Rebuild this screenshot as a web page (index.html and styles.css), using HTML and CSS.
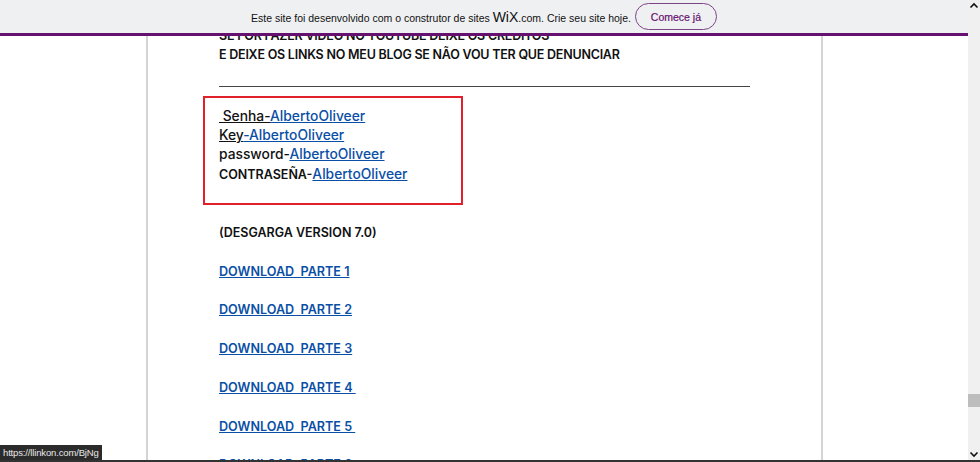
FILE: index.html
```html
<!DOCTYPE html>
<html lang="pt">
<head>
    <meta charset="UTF-8">
    <meta name="viewport" content="width=device-width, initial-scale=1.0">
    <title>Download</title>
    <link rel="stylesheet" href="styles.css">
</head>
<body>

<div class="window">
    <div class="viewport">
        <div class="banner">
            <span class="banner-text">Este site foi desenvolvido com o construtor de sites <span class="wix">WiX</span>.com. Crie seu site hoje.</span>
            <a class="banner-btn" href="#">Comece já</a>
        </div>

        <div class="column">
            <p class="line strong tight">SE FOR FAZER VIDEO NO YOUTUBE DEIXE OS CREDITOS</p>
            <p class="line strong tight">E DEIXE OS LINKS NO MEU BLOG SE NÃO VOU TER QUE DENUNCIAR</p>
            <hr class="rule">

            <div class="passwords">
                <p class="line"><u>&nbsp;Senha-</u><a href="#">AlbertoOliveer</a></p>
                <p class="line"><u>Key</u><a href="#">-AlbertoOliveer</a></p>
                <p class="line">password-<a href="#">AlbertoOliveer</a></p>
                <p class="line"><span class="caps">CONTRASEÑA-</span><a href="#">AlbertoOliveer</a></p>
            </div>

            <p class="line strong">(DESGARGA VERSION 7.0)</p>

            <ul class="downloads">
                <li><a href="#">DOWNLOAD&nbsp; PARTE 1</a></li>
                <li><a href="#">DOWNLOAD&nbsp; PARTE 2</a></li>
                <li><a href="#">DOWNLOAD&nbsp; PARTE 3</a></li>
                <li><a href="#">DOWNLOAD&nbsp; PARTE 4&nbsp;</a></li>
                <li><a href="#">DOWNLOAD&nbsp; PARTE 5&nbsp;</a></li>
                <li><a href="#">DOWNLOAD&nbsp; PARTE 6</a></li>
            </ul>
        </div>

        <div class="status">https://llinkon.com/BjNg</div>
    </div>

    <div class="scrollbar">
        <svg class="arrow" width="12" height="12" viewBox="0 0 12 12"><path d="M2.5 7.5 6 4 9.5 7.5" fill="none" stroke="#111" stroke-width="1.6"/></svg>
        <div class="track"><div class="thumb"></div></div>
        <svg class="arrow" width="12" height="12" viewBox="0 0 12 12"><path d="M2.5 4.5 6 8 9.5 4.5" fill="none" stroke="#111" stroke-width="1.6"/></svg>
    </div>
</div>

<div class="taskbar-edge"></div>

</body>
</html>
```

FILE: styles.css
```css
html, body {
    margin: 0;
    height: 100%;
    overflow: hidden;
    background: #fff;
}
body {
    display: flex;
    flex-direction: column;
    font-family: Inter, "Liberation Sans", sans-serif;
}
.window {
    flex: 1;
    display: flex;
    min-height: 0;
}
.viewport {
    flex: 1;
    position: relative;
    overflow: hidden;
}

/* wix banner sits over the page */
.banner {
    position: absolute;
    top: 0;
    left: 0;
    right: 0;
    height: 33px;
    display: flex;
    align-items: center;
    justify-content: center;
    gap: 4px;
    background: #eff0f2;
    border-bottom: 3px solid #66106f;
    font-family: "Liberation Sans", Arial, sans-serif;
    font-size: 10.5px;
    color: #111;
}
.wix {
    font-size: 14px;
    line-height: 1;
}
.banner-btn {
    display: flex;
    align-items: center;
    justify-content: center;
    width: 80px;
    height: 25px;
    border: 1px solid #7d4488;
    border-radius: 14px;
    color: #66106f;
    text-decoration: none;
    -webkit-text-stroke: 0.2px #66106f;
}

.column {
    width: 531px;
    margin-left: 146px;
    padding: 26px 71px 0;
    height: 100%;
    border-left: 2px solid #d4d4d4;
    border-right: 2px solid #d4d4d4;
    font-size: 13.8px;
    line-height: 19.35px;
    font-weight: 500;
    color: #111;
}
.line {
    margin: 0;
    white-space: nowrap;
}
.strong {
    font-size: 12.5px;
    font-weight: 600;
}
.tight {
    letter-spacing: -0.23px;
}
.caps {
    font-size: 12.5px;
    font-weight: 600;
}
a {
    color: #0a4fa6;
}
.rule {
    margin: 21px 0 0;
    border: 0;
    border-top: 1px solid #444;
}
.passwords {
    position: relative;
    margin-top: 20px;
    padding-bottom: 39px;
}
/* red box was drawn on top of the screenshot */
.passwords::before {
    content: "";
    position: absolute;
    left: -16px;
    top: -11px;
    width: 256px;
    height: 105px;
    border: 2px solid #e2202c;
}
.downloads {
    list-style: none;
    margin: 0;
    padding: 0;
    font-size: 12.6px;
    font-weight: 600;
}
.downloads li {
    margin-top: 19.35px;
}

.status {
    position: absolute;
    left: 0;
    bottom: 0;
    width: 102px;
    height: 15px;
    padding-left: 3px;
    box-sizing: border-box;
    line-height: 15px;
    background: #2b2b2b;
    color: #e8e8e8;
    font-family: "Liberation Sans", Arial, sans-serif;
    font-size: 9.5px;
    letter-spacing: -0.15px;
}

.scrollbar {
    width: 12px;
    display: flex;
    flex-direction: column;
    background: #f0f0f0;
}
.track {
    flex: 1;
    padding-top: 382px;
}
.thumb {
    height: 13px;
    background: #bdbdbd;
}
.arrow {
    flex: none;
}
.taskbar-edge {
    flex: none;
    height: 2px;
    background: #333;
}
```
